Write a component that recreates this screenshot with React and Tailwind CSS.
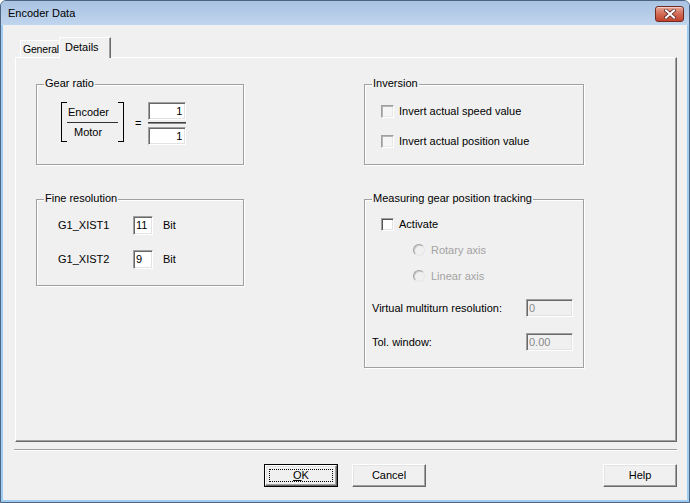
import React from "react";

const sunken =
  "border border-t-[#a0a0a0] border-l-[#a0a0a0] border-r-white border-b-white shadow-[inset_1px_1px_0_#696969,inset_-1px_-1px_0_#e3e3e3]";

function Group({ label, className, children }) {
  return (
    <div
      className={`relative border border-[#a0a0a0] shadow-[inset_1px_1px_0_#ffffff,1px_1px_0_#ffffff] ${className}`}
    >
      <span className="absolute top-[-8px] left-[7px] px-[1px] bg-[#f0f0f0] leading-[13px] whitespace-nowrap">
        {label}
      </span>
      {children}
    </div>
  );
}

function Check({ dark }) {
  return (
    <div
      className={
        dark
          ? "w-[13px] h-[13px] shrink-0 bg-white border border-t-[#a0a0a0] border-l-[#a0a0a0] border-r-white border-b-white shadow-[inset_1px_1px_0_#555555,inset_-1px_-1px_0_#e3e3e3]"
          : "w-[13px] h-[13px] shrink-0 bg-[#f6f6f6] border border-t-[#a0a0a0] border-l-[#a0a0a0] border-r-white border-b-white shadow-[inset_1px_1px_0_#b4b4b4,inset_-1px_-1px_0_#e8e8e8]"
      }
    />
  );
}

function Radio({ label }) {
  return (
    <div className="flex items-center pl-[48px] h-[26px]">
      <div className="w-[12px] h-[12px] rounded-full bg-[#f0f0f0] border border-t-[#a0a0a0] border-l-[#a0a0a0] border-r-[#e6e6e6] border-b-[#e6e6e6] shadow-[inset_1px_1px_0_#cfcfcf]" />
      <span className="ml-[6px] text-[#a3a3a3]">{label}</span>
    </div>
  );
}

function Button({ children, isDefault, className }) {
  const inner = (
    <div className="w-full h-full flex items-center justify-center bg-[#f0f0f0] border border-t-white border-l-white border-r-[#696969] border-b-[#696969] shadow-[inset_-1px_-1px_0_#a0a0a0,inset_1px_1px_0_#e3e3e3]">
      {isDefault ? (
        <div className="w-[64px] h-[13px] flex items-center justify-center border border-dotted border-black">
          {children}
        </div>
      ) : (
        children
      )}
    </div>
  );
  if (isDefault) {
    return (
      <div className={`w-[74px] h-[23px] border border-black ${className || ""}`}>{inner}</div>
    );
  }
  return <div className={`w-[74px] h-[23px] ${className || ""}`}>{inner}</div>;
}

export default function App() {
  return (
    <div className="w-[690px] h-[503px] font-['Liberation_Sans',Arial,sans-serif] text-[11px] leading-[13px] text-black">
      <div className="w-full h-full flex flex-col border border-[#4d6482] rounded-t-[6px] bg-[#9fcdf2] overflow-hidden">
        {/* Title bar */}
        <div className="h-[24px] shrink-0 flex items-center justify-between pl-[7px] pr-[5px] bg-linear-to-b from-[#a9c3e2] to-[#c0d5ee]">
          <span className="text-[11px]">Encoder Data</span>
          <div className="w-[29px] h-[16px] mt-[1px] flex items-center justify-center rounded-[3px] border border-[#6e2c25] bg-linear-to-b from-[#e6a595] via-[#d26a55] to-[#c1412b] shadow-[inset_0_1px_0_#f4cfc5]">
            <svg width="12" height="10" viewBox="0 0 12 10">
              <path d="M2 1.5 L10 8.5 M10 1.5 L2 8.5" stroke="#5a2a25" strokeWidth="3.6" strokeLinecap="square" />
              <path d="M2 1.5 L10 8.5 M10 1.5 L2 8.5" stroke="#ffffff" strokeWidth="2" strokeLinecap="square" />
            </svg>
          </div>
        </div>

        {/* Client area */}
        <div className="flex-1 mx-[2px] mb-[2px] bg-[#f0f0f0] flex flex-col pt-[12px] pl-[12px] pr-[10px]">
          {/* Tabs */}
          <div className="h-[20px] flex items-end pl-[5px] relative z-10">
            <div className="w-[41px] h-[17px] flex items-center pl-[2px] text-[10.5px] tracking-[-0.2px] whitespace-nowrap border-l border-t border-white border-r border-r-[#a0a0a0]">
              General
            </div>
            <div className="w-[52px] h-[21px] -ml-[2px] -mb-[1px] flex items-center pl-[5px] pb-[2px] bg-[#f0f0f0] border-l border-t border-white border-r border-r-[#696969] shadow-[inset_-1px_0_0_#a0a0a0]">
              Details
            </div>
          </div>

          {/* Panel */}
          <div className="h-[385px] border-l border-t border-white border-r border-b border-r-[#696969] border-b-[#696969] shadow-[inset_-1px_-1px_0_#a0a0a0] flex pl-[20px] pt-[26px]">
            {/* Left column */}
            <div className="w-[208px] flex flex-col gap-[34px]">
              <Group label="Gear ratio" className="h-[81px]">
                <div className="flex items-start pl-[24px] pt-[17px]">
                  <div className="w-[6px] h-[40px] border-l border-t border-b border-black" />
                  <div className="w-[51px] h-[40px] flex flex-col">
                    <div className="h-[20px] flex items-center pl-[1px]">Encoder</div>
                    <div className="h-[1px] bg-[#303030]" />
                    <div className="h-[19px] flex items-center pl-[7px]">Motor</div>
                  </div>
                  <div className="w-[6px] h-[40px] border-r border-t border-b border-black" />
                  <div className="ml-[11px] self-center">=</div>
                  <div className="ml-[7px] flex flex-col">
                    <div className={`w-[38px] h-[18px] flex items-center justify-end pr-[3px] bg-white ${sunken}`}>1</div>
                    <div className="mt-[2px] h-[1px] bg-[#404040]" />
                    <div className="h-[1px] bg-[#8a8a8a]" />
                    <div className={`mt-[3px] w-[38px] h-[18px] flex items-center justify-end pr-[3px] bg-white ${sunken}`}>1</div>
                  </div>
                </div>
              </Group>

              <Group label="Fine resolution" className="h-[87px]">
                <div className="flex flex-col pl-[21px] pt-[16px] gap-[15px]">
                  <div className="h-[19px] flex items-center">
                    <span className="w-[75px]">G1_XIST1</span>
                    <div className={`w-[20px] h-[19px] flex items-center pl-[2px] bg-white ${sunken}`}>11</div>
                    <span className="ml-[10px]">Bit</span>
                  </div>
                  <div className="h-[19px] flex items-center">
                    <span className="w-[75px]">G1_XIST2</span>
                    <div className={`w-[20px] h-[19px] flex items-center pl-[2px] bg-white ${sunken}`}>9</div>
                    <span className="ml-[10px]">Bit</span>
                  </div>
                </div>
              </Group>
            </div>

            {/* Right column */}
            <div className="w-[220px] ml-[120px] flex flex-col gap-[34px]">
              <Group label="Inversion" className="h-[81px]">
                <div className="flex flex-col pl-[16px] pt-[20px] gap-[17px]">
                  <div className="h-[13px] flex items-center">
                    <Check />
                    <span className="ml-[5px]">Invert actual speed value</span>
                  </div>
                  <div className="h-[13px] flex items-center">
                    <Check />
                    <span className="ml-[5px]">Invert actual position value</span>
                  </div>
                </div>
              </Group>

              <Group label="Measuring gear position tracking" className="h-[169px]">
                <div className="flex flex-col pt-[11px]">
                  <div className="h-[26px] flex items-center pl-[16px]">
                    <Check dark />
                    <span className="ml-[5px]">Activate</span>
                  </div>
                  <Radio label="Rotary axis" />
                  <Radio label="Linear axis" />
                  <div className="mt-[10px] h-[18px] flex items-center pl-[7px]">
                    <span className="w-[154px]">Virtual multiturn resolution:</span>
                    <div className={`w-[47px] h-[18px] flex items-center pl-[2px] bg-[#f0f0f0] text-[#8a8a8a] ${sunken}`}>0</div>
                  </div>
                  <div className="mt-[16px] h-[18px] flex items-center pl-[7px]">
                    <span className="w-[154px]">Tol. window:</span>
                    <div className={`w-[47px] h-[18px] flex items-center pl-[2px] bg-[#f0f0f0] text-[#8a8a8a] ${sunken}`}>0.00</div>
                  </div>
                </div>
              </Group>
            </div>
          </div>

          {/* Separator */}
          <div className="mt-[7px] -ml-[1px] h-[2px] border-t border-[#a0a0a0] border-b border-b-white" />

          {/* Buttons */}
          <div className="mt-[13px] flex pl-[249px]">
            <Button isDefault>
              <span>
                <span className="underline">O</span>K
              </span>
            </Button>
            <Button className="ml-[14px]">Cancel</Button>
            <Button className="ml-auto">Help</Button>
          </div>
        </div>
      </div>
    </div>
  );
}
